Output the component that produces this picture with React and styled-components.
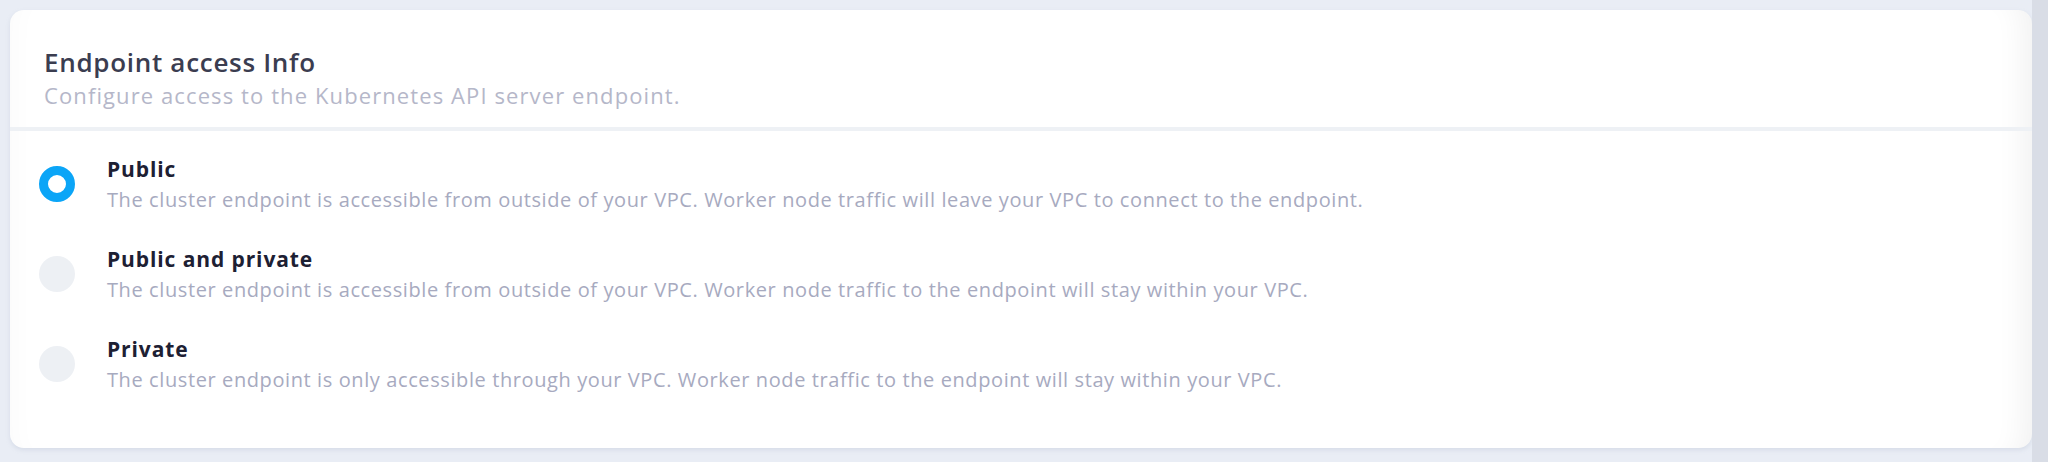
import React, { useState } from 'react';
import styled, { createGlobalStyle } from 'styled-components';

const GlobalStyle = createGlobalStyle`
  html, body {
    margin: 0;
    padding: 0;
    background: #e9edf5;
  }
  body {
    font-family: "Open Sans", "Liberation Sans", sans-serif;
  }
`;

const Page = styled.div`
  display: flex;
  width: 2048px;
  height: 462px;
  background: #e9edf5;
`;

const Main = styled.div`
  flex: 1;
  padding: 10px 0 14px 10px;
`;

const Gutter = styled.div`
  width: 16px;
  background: #d9dde6;
`;

const Card = styled.section`
  height: 100%;
  box-sizing: border-box;
  background: #ffffff;
  border-radius: 14px;
  box-shadow: 0 2px 4px rgba(160, 170, 195, 0.25),
    inset -34px 0 30px -26px rgba(0, 0, 0, 0.06),
    inset 30px 0 30px -28px rgba(0, 0, 0, 0.025);
  overflow: hidden;
`;

const Header = styled.header`
  padding: 35px 34px 17px;
  border-bottom: 4px solid #eef1f5;
`;

const Title = styled.h2`
  margin: 0;
  font-size: 26px;
  line-height: 34px;
  font-weight: 600;
  letter-spacing: 0.7px;
  color: #3b3d50;
`;

const Subtitle = styled.p`
  margin: 1px 0 0;
  font-size: 22px;
  line-height: 30px;
  letter-spacing: 1.1px;
  color: #b5b7c9;
`;

const Options = styled.div`
  display: flex;
  flex-direction: column;
  gap: 32px;
  padding: 24px 29px 0;
`;

const Option = styled.label`
  display: flex;
  align-items: center;
  gap: 32px;
  cursor: pointer;
`;

const Radio = styled.span`
  flex: none;
  width: 36px;
  height: 36px;
  box-sizing: border-box;
  border-radius: 50%;
  background: ${({ checked }) => (checked ? '#ffffff' : '#edf0f4')};
  border: ${({ checked }) => (checked ? '9px solid #0ba5f7' : 'none')};
`;

const Text = styled.div`
  display: flex;
  flex-direction: column;
  gap: 4px;
`;

const Label = styled.span`
  font-size: 21px;
  line-height: 28px;
  font-weight: 700;
  letter-spacing: 0.9px;
  color: #1d2033;
`;

const Desc = styled.span`
  font-size: 20px;
  line-height: 26px;
  letter-spacing: 0.6px;
  color: #a7aabf;
`;

const options = [
  {
    id: 'public',
    title: 'Public',
    text: 'The cluster endpoint is accessible from outside of your VPC. Worker node traffic will leave your VPC to connect to the endpoint.',
  },
  {
    id: 'both',
    title: 'Public and private',
    text: 'The cluster endpoint is accessible from outside of your VPC. Worker node traffic to the endpoint will stay within your VPC.',
  },
  {
    id: 'private',
    title: 'Private',
    text: 'The cluster endpoint is only accessible through your VPC. Worker node traffic to the endpoint will stay within your VPC.',
  },
];

export default function App() {
  const [selected, setSelected] = useState('public');

  return (
    <Page>
      <GlobalStyle />
      <Main>
        <Card>
          <Header>
            <Title>Endpoint access Info</Title>
            <Subtitle>Configure access to the Kubernetes API server endpoint.</Subtitle>
          </Header>
          <Options>
            {options.map((item) => (
              <Option key={item.id} onClick={() => setSelected(item.id)}>
                <Radio checked={selected === item.id} />
                <Text>
                  <Label>{item.title}</Label>
                  <Desc>{item.text}</Desc>
                </Text>
              </Option>
            ))}
          </Options>
        </Card>
      </Main>
      <Gutter />
    </Page>
  );
}
